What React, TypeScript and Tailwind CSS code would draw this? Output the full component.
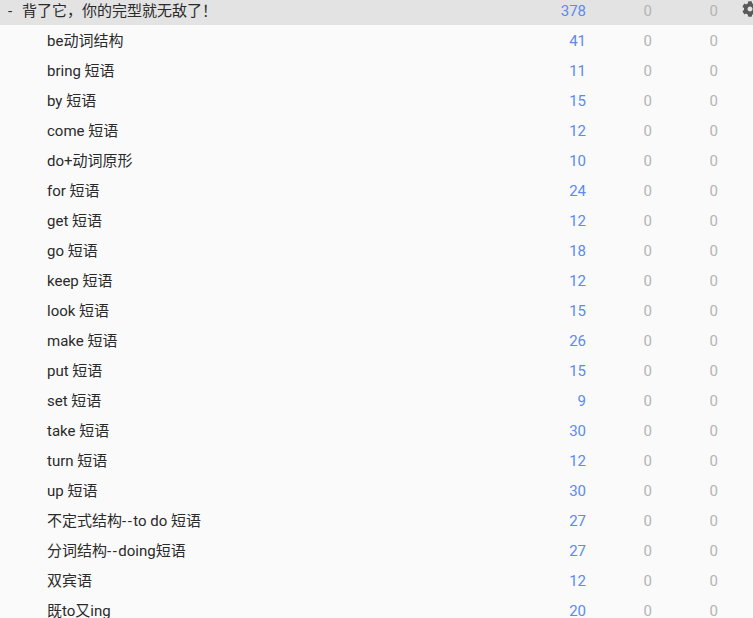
import { FaCog } from "react-icons/fa";

const rows: [string, number][] = [
  ["be动词结构", 41],
  ["bring 短语", 11],
  ["by 短语", 15],
  ["come 短语", 12],
  ["do+动词原形", 10],
  ["for 短语", 24],
  ["get 短语", 12],
  ["go 短语", 18],
  ["keep 短语", 12],
  ["look 短语", 15],
  ["make 短语", 26],
  ["put 短语", 15],
  ["set 短语", 9],
  ["take 短语", 30],
  ["turn 短语", 12],
  ["up 短语", 30],
  ["不定式结构--to do 短语", 27],
  ["分词结构--doing短语", 27],
  ["双宾语", 12],
  ["既to又ing", 20],
];

function Nums({ n }: { n: number }) {
  return (
    <>
      <div className="w-[60px] text-right pr-[8px] text-[#5b8bec] absolute left-[534px] text-[15px]">{n}</div>
      <div className="w-[60px] text-right pr-[8px] text-[#b4b4b4] absolute left-[600px] text-[15px]">0</div>
      <div className="w-[60px] text-right pr-[8px] text-[#b4b4b4] absolute left-[666px] text-[15px]">0</div>
    </>
  );
}

function Label({ text }: { text: string }) {
  const parts = text.split("--");
  if (parts.length === 1) return <span>{text}</span>;
  return (
    <span className="[font-variant-ligatures:none]">
      {parts[0]}
      <span className="tracking-[1.5px]">--</span>
      {parts[1]}
    </span>
  );
}

export default function App() {
  return (
    <div className="w-[753px] h-[618px] overflow-hidden bg-[#fafafa] text-[15px] text-[#2a2a2a] font-['Roboto','Noto_Sans_CJK_SC',sans-serif]">
      <div className="relative flex items-center h-[25px] pb-[3px] bg-[#e3e3e3]">
        <span className="pl-[8px] w-[22px]">-</span>
        <span>背了它，你的完型就无敌了！</span>
        <Nums n={378} />
        <FaCog size={16} className="absolute left-[742px] top-[1px] text-[#5a5a5a]" />
      </div>
      {rows.map(([t, n]) => (
        <div key={t} className="relative flex items-center h-[30px] pt-[2px] pl-[47px]">
          <Label text={t} />
          <Nums n={n} />
        </div>
      ))}
    </div>
  );
}
